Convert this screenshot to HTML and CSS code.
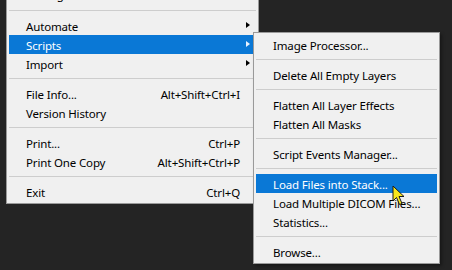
FILE: index.html
```html
<!DOCTYPE html>
<html>
<head>
  <meta charset="utf-8">
  <title>File menu - Scripts</title>
  <link rel="stylesheet" href="styles.css">
</head>
<body>
  <div class="stage">
    <ul class="menu main">
      <li class="item above"><span class="label">Package...</span></li>
      <li class="sep"></li>
      <li class="item sub"><span class="label">Automate</span></li>
      <li class="item sub active"><span class="label">Scripts</span></li>
      <li class="item sub"><span class="label">Import</span></li>
      <li class="sep"></li>
      <li class="item"><span class="label">File Info...</span><span class="key">Alt+Shift+Ctrl+I</span></li>
      <li class="item"><span class="label">Version History</span></li>
      <li class="sep"></li>
      <li class="item"><span class="label">Print...</span><span class="key">Ctrl+P</span></li>
      <li class="item"><span class="label">Print One Copy</span><span class="key">Alt+Shift+Ctrl+P</span></li>
      <li class="sep"></li>
      <li class="item"><span class="label">Exit</span><span class="key">Ctrl+Q</span></li>
    </ul>

    <ul class="menu submenu">
      <li class="item"><span class="label">Image Processor...</span></li>
      <li class="sep"></li>
      <li class="item"><span class="label">Delete All Empty Layers</span></li>
      <li class="sep"></li>
      <li class="item"><span class="label">Flatten All Layer Effects</span></li>
      <li class="item"><span class="label">Flatten All Masks</span></li>
      <li class="sep"></li>
      <li class="item"><span class="label">Script Events Manager...</span></li>
      <li class="sep"></li>
      <li class="item active"><span class="label">Load Files into Stack...</span></li>
      <li class="item"><span class="label">Load Multiple DICOM Files...</span></li>
      <li class="item"><span class="label">Statistics...</span></li>
      <li class="sep"></li>
      <li class="item"><span class="label">Browse...</span></li>
    </ul>

    <svg class="cursor" width="14" height="21" viewBox="0 0 14 21">
      <path d="M1 1 L1 16 L4.5 12.5 L7.5 19.5 L10 18.5 L7 11.5 L12 11.5 Z" fill="#f7e61c" stroke="#1a1a1a" stroke-width="1" stroke-linejoin="round"/>
    </svg>
  </div>
</body>
</html>
```

FILE: styles.css
```css
html, body { margin: 0; height: 100%; overflow: hidden; }
body { background: #242424; font-family: "Noto Sans", "Open Sans", sans-serif; font-size: 11.5px; letter-spacing: -0.15px; color: #000; }

.stage { position: relative; padding-left: 6px; margin-top: -17px; }

.menu { list-style: none; margin: 0; padding: 2px; background: #f0f0f0; border: 1px solid #9a9a9a; box-sizing: border-box; }
.main { width: 253px; }
.submenu { position: absolute; left: 253px; top: 49px; width: 187px; box-shadow: 2px 2px 3px rgba(0,0,0,.35); }

.item { display: flex; align-items: center; height: 19px; padding: 1px 16px 0 17px; box-sizing: border-box; white-space: nowrap; }
.item .label { flex: 1; }
.item.above { padding-top: 0; padding-bottom: 3px; }
.item.active { background: #0a78d6; color: #fff; }

.sub { position: relative; }
.sub::after { content: ""; position: absolute; right: 6px; top: 6px; border-left: 4px solid #000; border-top: 3.5px solid transparent; border-bottom: 3.5px solid transparent; }
.sub.active::after { border-left-color: #e8f2ff; }

.sep { height: 11px; position: relative; }
.sep::before { content: ""; position: absolute; left: 0; right: 0; top: 5px; height: 1px; background: #cdcdcd; }

.cursor { position: absolute; left: 392px; top: 202px; }
```
